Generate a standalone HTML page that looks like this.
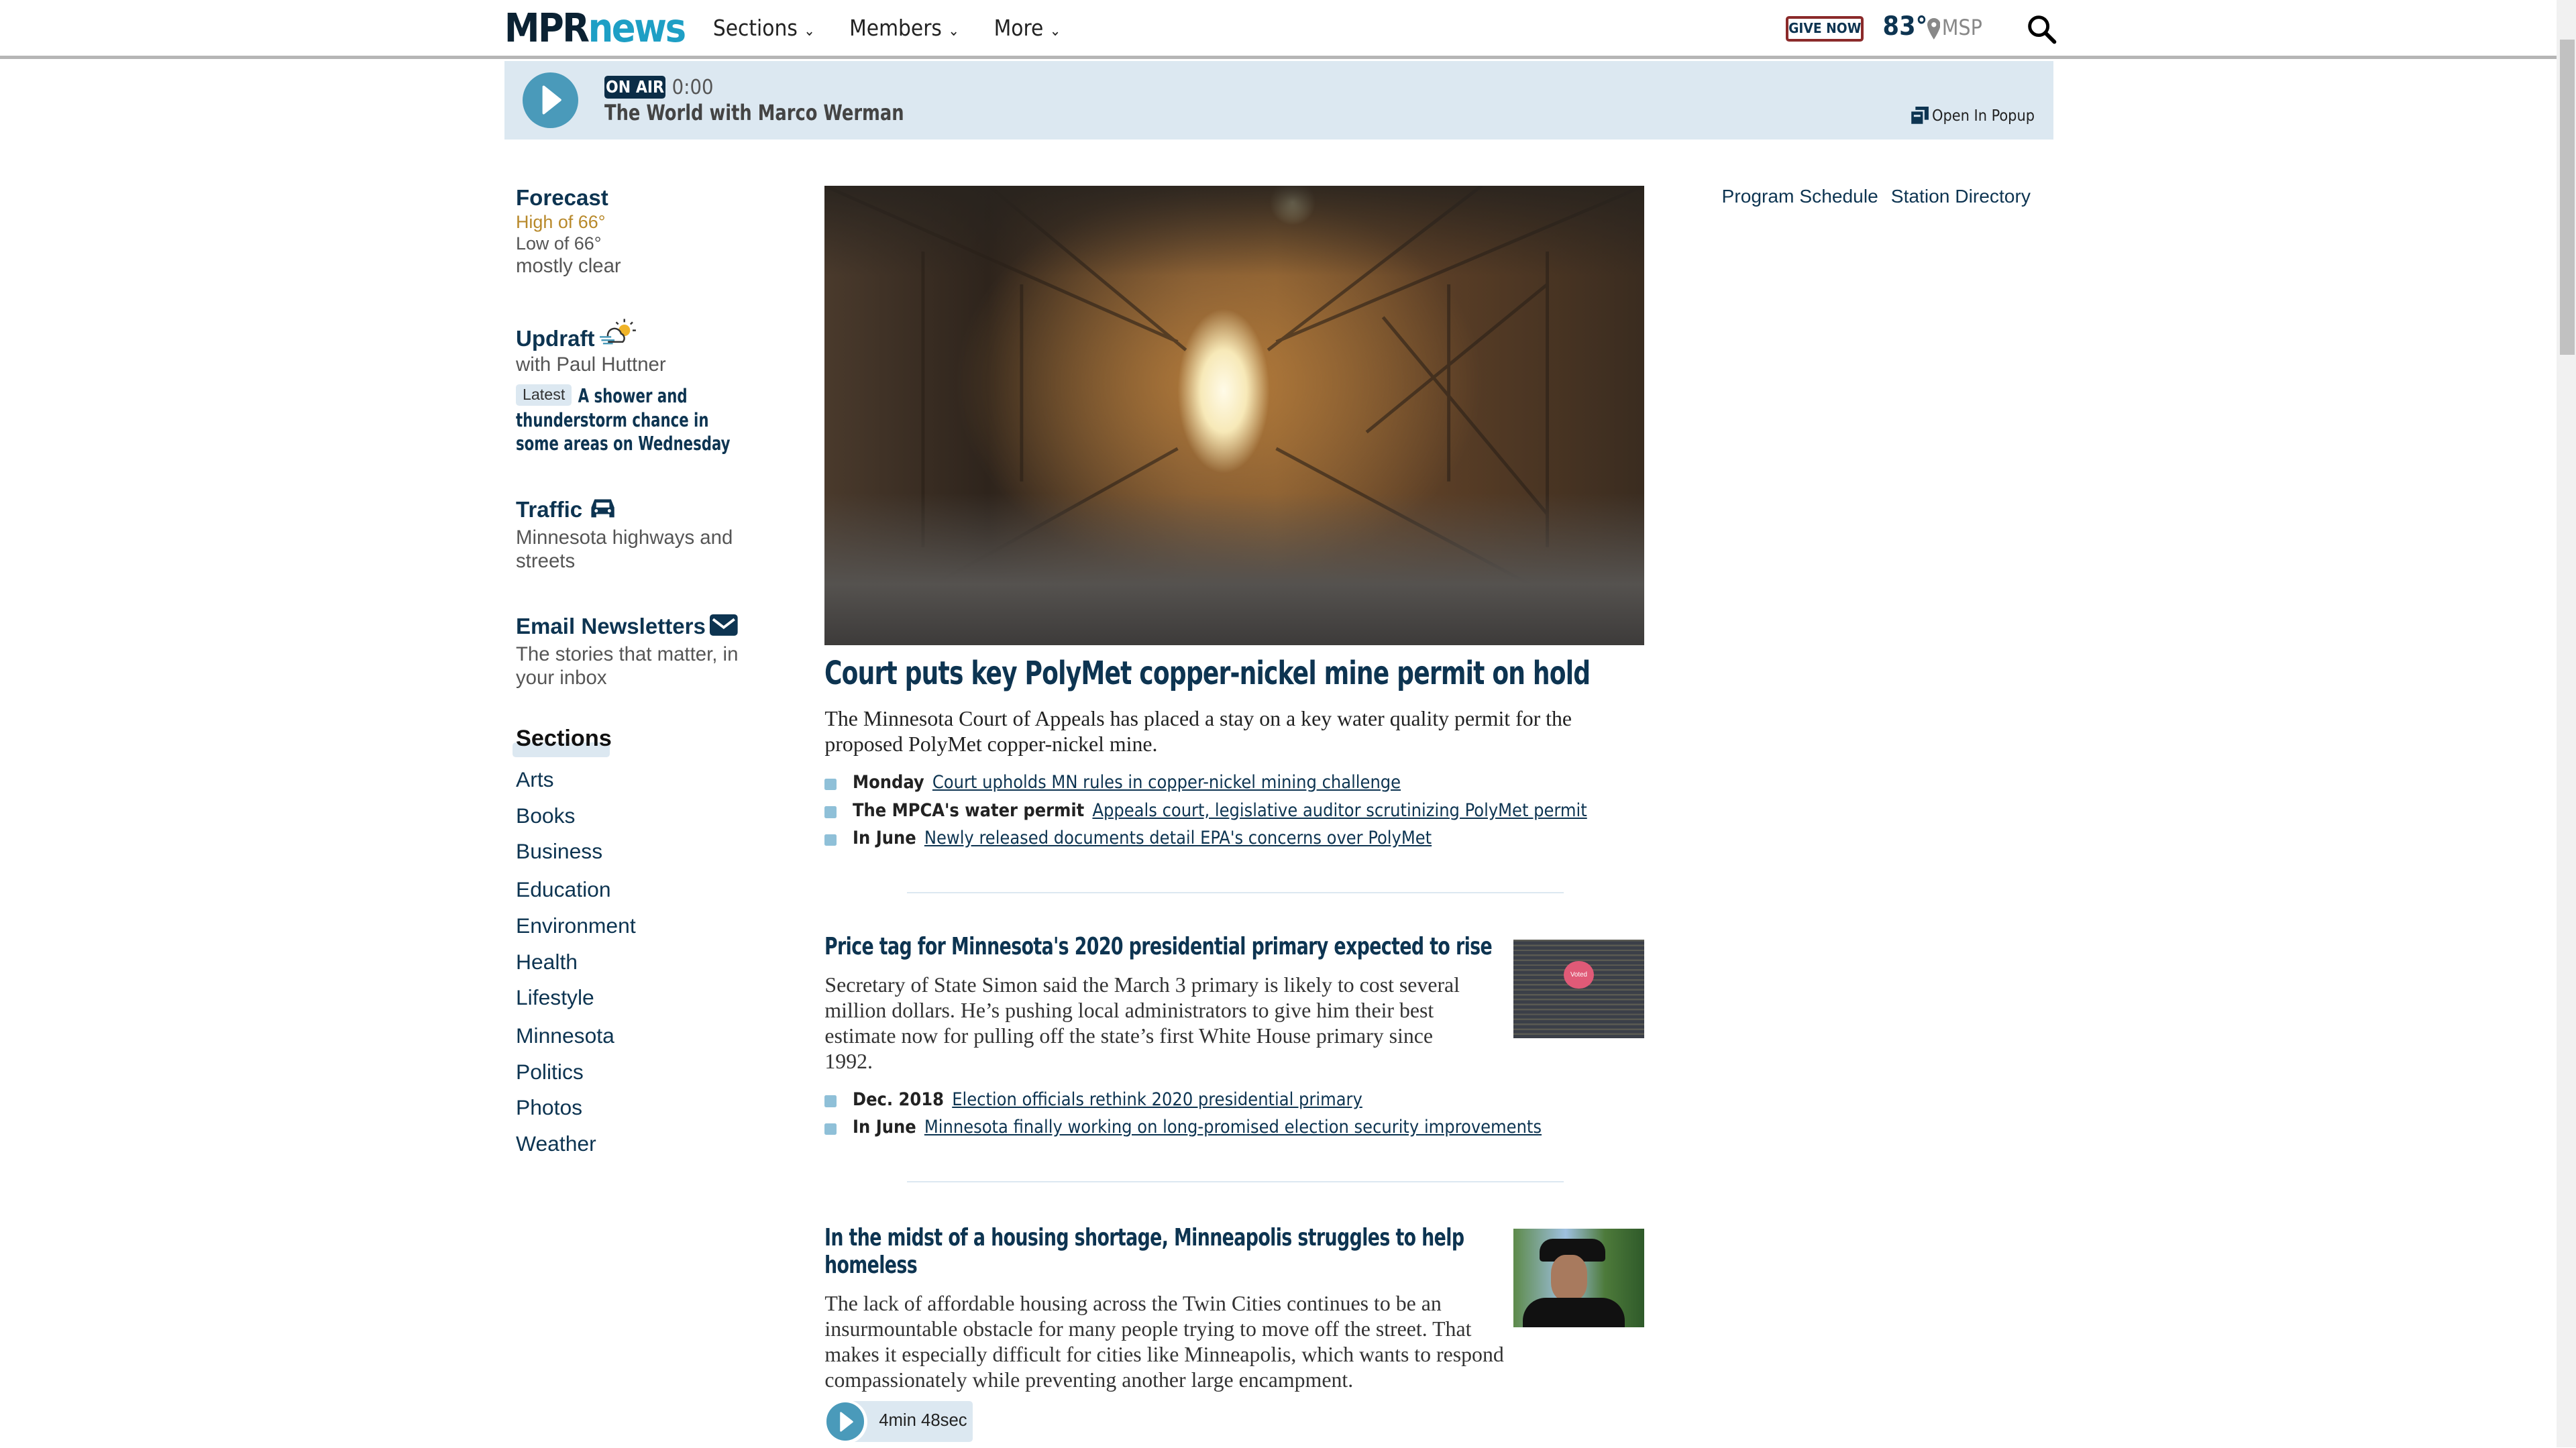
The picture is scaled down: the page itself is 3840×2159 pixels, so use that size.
<!DOCTYPE html>
<html><head><meta charset="utf-8">
<style>
html{zoom:2.449;}
body{margin:0;width:1568px;height:881px;overflow:hidden;background:#fff;font-family:"Liberation Sans",sans-serif;position:relative;}
.a{position:absolute;white-space:nowrap;}
.cond{font-family:"DejaVu Sans Condensed","Liberation Sans",sans-serif;}
.sx{transform:scaleX(.84);transform-origin:0 0;}
.serif{font-family:"Liberation Serif",serif;}
a{color:#0d3451;}
.h{font-weight:bold;font-size:13.5px;color:#0d3451;}
.g{font-size:12px;color:#555;}
.sec{font-size:13px;color:#0d3451;left:314px;}
.bul{width:7px;height:7px;background:#8fc0d8;border-radius:1px;left:502px;}
.bl{font-size:11px;color:#222;}
.bl b{margin-right:5px;}
.bl a{color:#0d3451;}
</style></head><body>
<!-- header -->
<div class="a" style="left:0;top:34px;width:1556px;height:2px;background:#b5b5b5"></div>
<div class="a" style="left:307px;top:3px;font-size:24px;font-weight:bold;letter-spacing:-1px;font-family:'DejaVu Sans Condensed',sans-serif"><span style="color:#0b2233">MPR</span><span style="color:#1e9fc5">news</span></div>
<div class="a cond" style="left:434px;top:9px;font-size:13.5px;color:#222">Sections <span style="font-size:9px">⌄</span></div>
<div class="a cond" style="left:517px;top:9px;font-size:13.5px;color:#222">Members <span style="font-size:9px">⌄</span></div>
<div class="a cond" style="left:605px;top:9px;font-size:13.5px;color:#222">More <span style="font-size:9px">⌄</span></div>
<div class="a cond" style="left:1087px;top:10px;width:44px;height:12px;border:2px solid #8b2a2a;border-radius:2px;font-size:8.5px;font-weight:bold;color:#0d3451;text-align:center;line-height:12px">GIVE NOW</div>
<div class="a cond" style="left:1146px;top:7px;font-size:16px;font-weight:bold;color:#0d3451">83°</div>
<svg class="a" style="left:1173px;top:11px" width="8" height="13" viewBox="0 0 8 13"><path d="M4 0a4 4 0 0 0-4 4c0 3 4 9 4 9s4-6 4-9a4 4 0 0 0-4-4zm0 5.5a1.5 1.5 0 1 1 0-3 1.5 1.5 0 0 1 0 3z" fill="#888"/></svg>
<div class="a cond" style="left:1182px;top:9px;font-size:13px;color:#888">MSP</div>
<svg class="a" style="left:1234px;top:9px" width="18" height="18" viewBox="0 0 18 18"><circle cx="7" cy="7" r="5.5" fill="none" stroke="#000" stroke-width="2"/><path d="M11 11l5.5 5.5" stroke="#000" stroke-width="2.4" stroke-linecap="round"/></svg>
<div class="a" style="left:1556px;top:0;width:12px;height:881px;background:#f1f1f1"></div>
<div class="a" style="left:1558px;top:24px;width:9px;height:192px;background:#c1c1c1"></div>
<!-- player -->
<div class="a" style="left:307px;top:37px;width:943px;height:48px;background:#dce8f1"></div>
<div class="a" style="left:318px;top:44px;width:34px;height:34px;border-radius:50%;background:#4a9aba"></div>
<svg class="a" style="left:330px;top:52px" width="12" height="18" viewBox="0 0 12 18"><path d="M1 1l10 8-10 8z" fill="#fff" stroke="#fff" stroke-linejoin="round" stroke-width="1.5"/></svg>
<div class="a cond" style="left:368px;top:46px;width:37px;height:14px;background:#0b2d47;border-radius:2px;color:#fff;font-size:10px;font-weight:bold;text-align:center;line-height:14px">ON AIR</div>
<div class="a cond" style="left:409px;top:46px;font-size:12.5px;color:#555">0:00</div>
<div class="a cond sx" style="left:368px;top:61px;font-size:13px;font-weight:bold;color:#444;transform:scaleX(.9)">The World with Marco Werman</div>
<svg class="a" style="left:1163px;top:65px" width="11" height="11" viewBox="0 0 11 11"><rect x="3" y="0" width="8" height="8" fill="#0d3451"/><rect x="0" y="2.5" width="8" height="8.5" fill="#0d3451" stroke="#dce8f1"/><rect x="2" y="5" width="4" height="1.2" fill="#dce8f1"/></svg>
<div class="a cond" style="left:1176px;top:65px;font-size:9.5px;color:#222">Open In Popup</div>
<!-- left column -->
<div class="a h" style="left:314px;top:113px">Forecast</div>
<div class="a" style="left:314px;top:129px;font-size:11px;color:#b8892b">High of 66°</div>
<div class="a" style="left:314px;top:142px;font-size:11px;color:#555">Low of 66°</div>
<div class="a g" style="left:314px;top:155px">mostly clear</div>
<div class="a h" style="left:314px;top:199px">Updraft</div>
<svg class="a" style="left:365px;top:193px" width="22" height="18" viewBox="0 0 22 18"><circle cx="15" cy="8" r="3.5" fill="#f0b429"/><path d="M15 1v2M20 3l-1.3 1.3M22 8h-2M10 3l1.3 1.3" stroke="#333" stroke-width="1"/><path d="M5 12a4 4 0 0 1 8-2 3 3 0 0 1 1 5H5" fill="#fff" stroke="#333" stroke-width="1"/><path d="M0 12h7M1 14h8M2 16h6" stroke="#4a9aba" stroke-width="1"/></svg>
<div class="a g" style="left:314px;top:215px">with Paul Huttner</div>
<div class="a" style="left:314px;top:234px;width:34px;height:13px;background:#dce8f1;border-radius:2px;font-size:9.5px;color:#333;text-align:center;line-height:13px">Latest</div>
<div class="a cond sx" style="left:314px;top:234px;width:160px;white-space:normal;font-size:11.5px;font-weight:bold;color:#0d3451;line-height:14.5px;text-indent:45px">A shower and thunderstorm chance in some areas on Wednesday</div>
<div class="a h" style="left:314px;top:303px">Traffic</div>
<svg class="a" style="left:359px;top:303px" width="16" height="13" viewBox="0 0 16 13"><path d="M3 1h10l2 5v6h-3v-2H4v2H1V6z" fill="#0d3451"/><rect x="4" y="3" width="8" height="3" fill="#fff"/><circle cx="4" cy="8" r="1" fill="#fff"/><circle cx="12" cy="8" r="1" fill="#fff"/></svg>
<div class="a g" style="left:314px;top:320px;line-height:14.5px">Minnesota highways and<br>streets</div>
<div class="a h" style="left:314px;top:374px">Email Newsletters</div>
<svg class="a" style="left:432px;top:374px" width="17" height="13" viewBox="0 0 17 13"><rect width="17" height="13" rx="2" fill="#0d3451"/><path d="M2 3l6.5 5L15 3" fill="none" stroke="#fff" stroke-width="1.6"/></svg>
<div class="a g" style="left:314px;top:391px;line-height:14.5px">The stories that matter, in<br>your inbox</div>
<div class="a" style="left:312px;top:452px;width:59px;height:9px;background:#dce8f1;border-radius:2px"></div>
<div class="a" style="left:314px;top:442px;font-size:14px;font-weight:bold;color:#111">Sections</div>
<div class="a sec" style="top:467px">Arts</div>
<div class="a sec" style="top:489px">Books</div>
<div class="a sec" style="top:511px">Business</div>
<div class="a sec" style="top:534px">Education</div>
<div class="a sec" style="top:556px">Environment</div>
<div class="a sec" style="top:578px">Health</div>
<div class="a sec" style="top:600px">Lifestyle</div>
<div class="a sec" style="top:623px">Minnesota</div>
<div class="a sec" style="top:645px">Politics</div>
<div class="a sec" style="top:667px">Photos</div>
<div class="a sec" style="top:689px">Weather</div>
<!-- main image -->
<div class="a" style="left:502px;top:113px;width:499px;height:280px;overflow:hidden;background:
radial-gradient(ellipse 28px 50px at 243px 125px,#fffbe8 0%,#f7e9b8 50%,rgba(230,190,120,0) 100%),
radial-gradient(circle 14px at 285px 10px,#fff6c0,rgba(255,220,120,0)),
radial-gradient(ellipse 160px 120px at 240px 120px,rgba(190,130,60,.85),rgba(80,50,30,0) 100%),
linear-gradient(90deg,#4a3a2c 0%,#2e241c 20%,#6b4c30 45%,#7a5530 55%,#5a3e26 75%,#3a2c20 100%);">
<svg width="499" height="280" style="position:absolute;left:0;top:0"><g stroke="#2a2018" stroke-width="2" opacity=".6" fill="none"><path d="M0 0L215 95M499 0L275 95M0 280L215 160M499 280L275 160M100 0L220 100M400 0L270 100"/><path d="M60 40v180M120 60v120M380 60v120M440 40v180M330 150L440 60M340 80L440 200"/></g></svg>
</div>
<div class="a" style="left:502px;top:300px;width:499px;height:93px;background:linear-gradient(180deg,rgba(80,75,70,0),#55524f 60%,#3d3b3a)"></div>
<div class="a" style="left:502px;top:113px;width:499px;height:55px;background:linear-gradient(180deg,rgba(40,35,30,.9),rgba(60,50,40,0))"></div>
<div class="a cond sx" style="left:502px;top:399px;font-size:19.5px;font-weight:bold;color:#0d3451;letter-spacing:-0.4px">Court puts key PolyMet copper-nickel mine permit on hold</div>
<div class="a serif" style="left:502px;top:430px;font-size:13px;color:#222;line-height:15.5px;width:480px;white-space:normal">The Minnesota Court of Appeals has placed a stay on a key water quality permit for the proposed PolyMet copper-nickel mine.</div>
<div class="a bul" style="top:474px"></div><div class="a bl cond" style="left:519px;top:470px"><b>Monday</b><a href="#">Court upholds MN rules in copper-nickel mining challenge</a></div>
<div class="a bul" style="top:491px"></div><div class="a bl cond" style="left:519px;top:487px"><b>The MPCA's water permit</b><a href="#">Appeals court, legislative auditor scrutinizing PolyMet permit</a></div>
<div class="a bul" style="top:508px"></div><div class="a bl cond" style="left:519px;top:504px"><b>In June</b><a href="#">Newly released documents detail EPA's concerns over PolyMet</a></div>
<div class="a" style="left:552px;top:543px;width:400px;height:1px;background:#dce8f1"></div>
<!-- story 2 -->
<div class="a cond sx" style="left:502px;top:568px;font-size:14.5px;font-weight:bold;color:#0d3451;letter-spacing:-0.3px">Price tag for Minnesota's 2020 presidential primary expected to rise</div>
<div class="a" style="left:921px;top:572px;width:80px;height:60px;background:repeating-linear-gradient(0deg,#3b3f48 0 2px,#5a5a52 2px 3px),#3e424a"></div>
<div class="a" style="left:952px;top:585px;width:18px;height:17px;border-radius:50%;background:#e05a77;font-size:4px;color:#fff;text-align:center;line-height:17px">Voted</div>
<div class="a serif" style="left:502px;top:592px;font-size:13px;color:#333;line-height:15.5px;width:392px;white-space:normal">Secretary of State Simon said the March 3 primary is likely to cost several million dollars. He’s pushing local administrators to give him their best estimate now for pulling off the state’s first White House primary since 1992.</div>
<div class="a bul" style="top:667px"></div><div class="a bl cond" style="left:519px;top:663px"><b>Dec. 2018</b><a href="#">Election officials rethink 2020 presidential primary</a></div>
<div class="a bul" style="top:684px"></div><div class="a bl cond" style="left:519px;top:680px"><b>In June</b><a href="#">Minnesota finally working on long-promised election security improvements</a></div>
<div class="a" style="left:552px;top:719px;width:400px;height:1px;background:#dce8f1"></div>
<!-- story 3 -->
<div class="a cond sx" style="left:502px;top:745px;font-size:14.5px;font-weight:bold;color:#0d3451;line-height:17px;width:470px;white-space:normal;letter-spacing:-0.3px">In the midst of a housing shortage, Minneapolis struggles to help homeless</div>
<div class="a" style="left:921px;top:748px;width:80px;height:60px;background:linear-gradient(90deg,#5d8a4a,#9fc0e0 40%,#4d7a3a 70%,#2f5a2a)"></div>
<div class="a" style="left:937px;top:754px;width:40px;height:14px;border-radius:8px 8px 2px 2px;background:#111"></div>
<div class="a" style="left:944px;top:764px;width:22px;height:28px;border-radius:40%;background:#a87a5e"></div>
<div class="a" style="left:927px;top:790px;width:62px;height:18px;border-radius:14px 14px 0 0;background:#111"></div>
<div class="a serif" style="left:502px;top:786px;font-size:13px;color:#333;line-height:15.5px;width:420px;white-space:normal">The lack of affordable housing across the Twin Cities continues to be an insurmountable obstacle for many people trying to move off the street. That makes it especially difficult for cities like Minneapolis, which wants to respond compassionately while preventing another large encampment.</div>
<div class="a" style="left:512px;top:853px;width:80px;height:25px;background:#dce8f1;border-radius:2px"></div>
<div class="a" style="left:501px;top:852px;width:27px;height:27px;border-radius:50%;background:#fff"></div>
<div class="a" style="left:503px;top:854px;width:23px;height:23px;border-radius:50%;background:#4a9aba"></div>
<svg class="a" style="left:511px;top:859px" width="9" height="13" viewBox="0 0 9 13"><path d="M1 1l7 5.5-7 5.5z" fill="#fff" stroke="#fff" stroke-linejoin="round"/></svg>
<div class="a" style="left:535px;top:859px;font-size:10.5px;color:#222">4min 48sec</div>
<!-- right -->
<div class="a" style="left:1048px;top:113px;font-size:11.5px;color:#0d3451">Program Schedule</div>
<div class="a" style="left:1151px;top:113px;font-size:11.5px;color:#0d3451">Station Directory</div>
</body></html>
